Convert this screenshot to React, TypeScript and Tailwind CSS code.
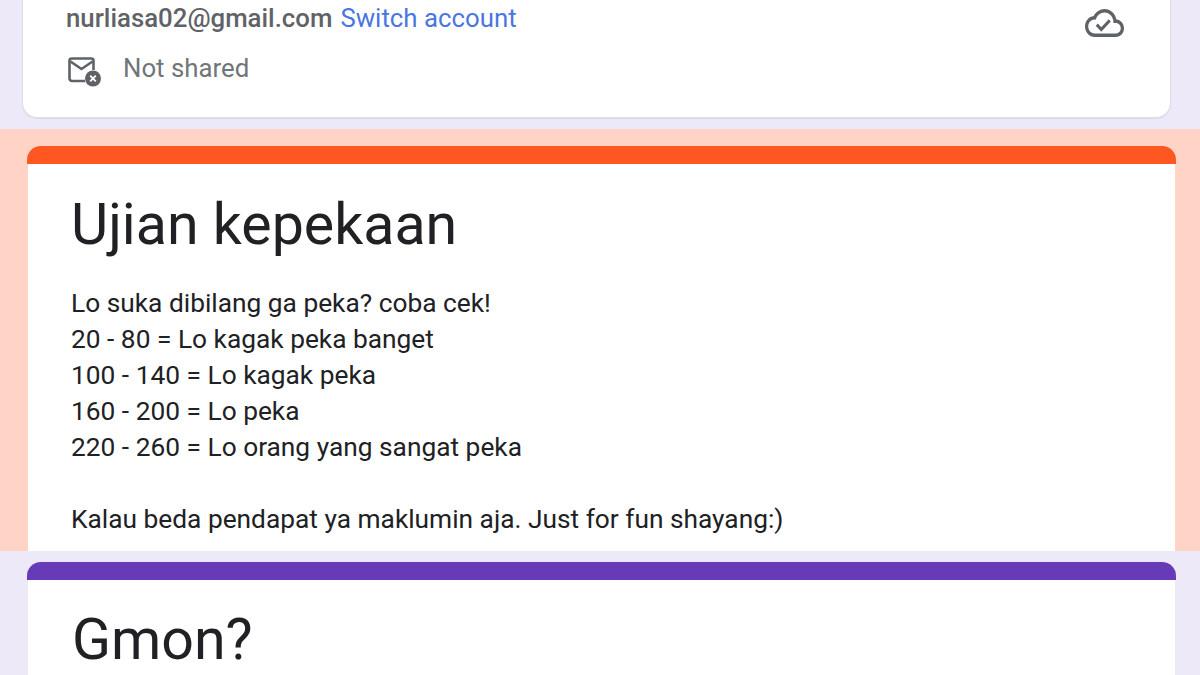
import React from "react";

function MailOff() {
  return (
    <svg width="34" height="30" viewBox="0 0 34 30" fill="none" className="block">
      <path d="M17 24H4C2.700 24 1.500 22.900 1.500 21.500V3.500C1.500 2.100 2.700 1.500 4 1.500H23C24.300 1.500 25.500 2.100 25.500 3.500V13" stroke="#5f6368" strokeWidth="2.600" />
      <path d="M2.500 4.500L13.500 12L24.500 4.500" stroke="#5f6368" strokeWidth="2.600" />
      <circle cx="25" cy="21.500" r="8" fill="#5f6368" />
      <path d="M22.200 18.700L27.800 24.300M27.800 18.700L22.200 24.300" stroke="#ffffff" strokeWidth="1.800" />
    </svg>
  );
}

function CloudDone() {
  return (
    <svg width="39" height="28" viewBox="0 4 24 16" preserveAspectRatio="none" fill="#5f6368" className="block">
      <path d="M19.350 10.040C18.670 6.590 15.640 4 12 4 9.110 4 6.600 5.640 5.350 8.040 2.340 8.360 0 10.910 0 14c0 3.310 2.690 6 6 6h13c2.760 0 5-2.240 5-5 0-2.640-2.050-4.780-4.650-4.960zM19 18H6c-2.210 0-4-1.790-4-4s1.790-4 4-4h.710C7.370 7.690 9.480 6 12 6c3.040 0 5.500 2.460 5.500 5.500v.5H19c1.660 0 3 1.340 3 3s-1.340 3-3 3z" />
      <path d="M10 17l-3.400-3.400 1.300-1.300L10 14.400l4.600-4.600 1.300 1.300z" />
    </svg>
  );
}

export default function App() {
  return (
    <div className="w-[1200px] h-[675px] overflow-hidden bg-[#ede9f8] font-['Roboto',sans-serif]">
      <section className="h-[129px] bg-[#ede9f8] pl-[23px] pr-[30px]">
        <div className="h-[117px] rounded-b-[14px] bg-white shadow-[0_1px_1px_1px_#dcdce6] pl-[43px] pr-[46px] flex justify-between">
          <div>
            <div className="h-[36px] flex items-center text-[25.800px] leading-[36px] whitespace-nowrap">
              <span className="font-medium text-[#5f6368]">nurliasa02@gmail.com</span>
              <span className="ml-[8px] text-[#4a76e0]">Switch account</span>
            </div>
            <div className="mt-[14px] flex items-start">
              <div className="pl-[2px] pt-[7px]">
                <MailOff />
              </div>
              <span className="ml-[21px] text-[25.800px] leading-[36px] text-[#70757a]">Not shared</span>
            </div>
          </div>
          <div className="pt-[9px]">
            <CloudDone />
          </div>
        </div>
      </section>
      <section className="h-[422px] overflow-hidden bg-[#ffd3c5] pt-[17px] pl-[27px] pr-[24px]">
        <div className="h-[18px] rounded-t-[14px] bg-[#ff5722]" />
        <div className="mx-[1px] h-[400px] bg-white pl-[43px] pt-[29px] text-[#202124]">
          <h1 className="text-[57.300px] leading-[64px] font-normal">Ujian kepekaan</h1>
          <div className="mt-[28px] text-[26.300px] leading-[36px] whitespace-nowrap">
            <p>Lo suka dibilang ga peka? coba cek!</p>
            <p>20 - 80 = Lo kagak peka banget</p>
            <p>100 - 140 = Lo kagak peka</p>
            <p>160 - 200 = Lo peka</p>
            <p>220 - 260 = Lo orang yang sangat peka</p>
            <p>&nbsp;</p>
            <p>Kalau beda pendapat ya maklumin aja. Just for fun shayang:)</p>
          </div>
        </div>
      </section>
      <section className="h-[124px] overflow-hidden bg-[#ede9f8] pt-[11px] pl-[27px] pr-[24px]">
        <div className="h-[18px] rounded-t-[14px] bg-[#673ab7]" />
        <div className="mx-[1px] h-[100px] bg-white pl-[44px] pt-[28px] text-[#202124]">
          <h2 className="text-[57.300px] leading-[64px] font-normal">Gmon?</h2>
        </div>
      </section>
    </div>
  );
}
